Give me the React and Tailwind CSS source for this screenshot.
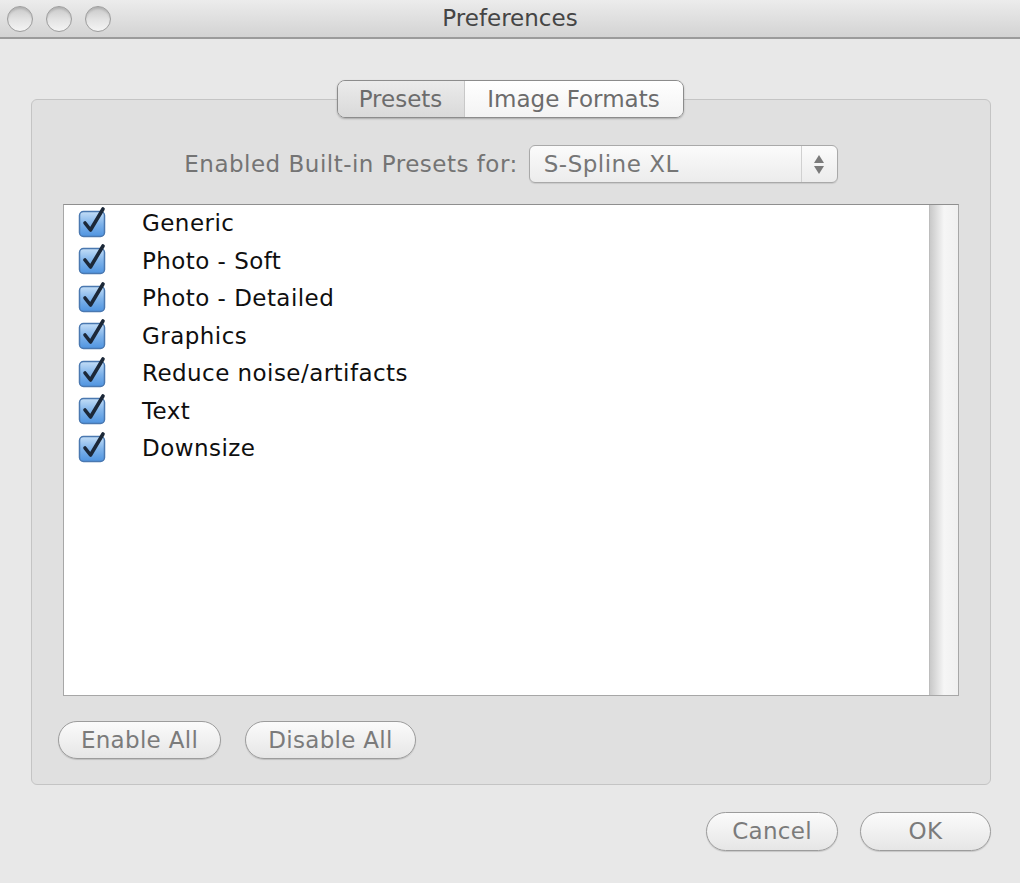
import React from 'react'

const presets = [
  'Generic',
  'Photo - Soft',
  'Photo - Detailed',
  'Graphics',
  'Reduce noise/artifacts',
  'Text',
  'Downsize',
]

const font = { fontFamily: '"DejaVu Sans", "Liberation Sans", sans-serif' }

const TrafficLight = () => (
  <div className="w-[26px] h-[26px] rounded-full border border-[#9d9d9d] bg-gradient-to-b from-[#c9c9c9] via-[#e2e2e2] to-[#f4f4f4] shadow-[inset_0_2px_2px_rgba(0,0,0,0.12)]" />
)

const CheckBox = () => (
  <svg width="30" height="32" viewBox="0 0 30 32" className="shrink-0 -mt-[4px]">
    <defs>
      <linearGradient id="cbFill" x1="0" y1="0" x2="0" y2="1">
        <stop offset="0" stopColor="#c4def7" />
        <stop offset="0.5" stopColor="#7fb3ea" />
        <stop offset="1" stopColor="#4f94e0" />
      </linearGradient>
    </defs>
    <rect x="1.5" y="5.5" width="25" height="25" rx="4" fill="url(#cbFill)" stroke="#4a78b0" strokeWidth="1.5" />
    <path d="M7 17 L12.5 24 L25 3" fill="none" stroke="#1c2838" strokeWidth="3.6" strokeLinecap="round" strokeLinejoin="round" />
  </svg>
)

const PillButton = ({ children, className }) => (
  <button
    className={`h-[38px] rounded-full border border-[#9c9c9c] bg-gradient-to-b from-[#fbfbfb] to-[#e6e6e6] text-[23px] tracking-[0.3px] text-[#7b7b7b] shadow-[0_1px_1px_rgba(0,0,0,0.15)] ${className}`}
    style={font}
  >
    {children}
  </button>
)

export default function App() {
  return (
    <div className="w-[1020px] h-[883px] bg-[#e8e8e8] flex flex-col overflow-hidden" style={font}>
      {/* title bar */}
      <div className="h-[39px] shrink-0 relative flex items-center bg-gradient-to-b from-[#ececec] to-[#d3d3d3] border-b-2 border-[#9b9b9b]">
        <div className="flex gap-[13px] pl-[7px]">
          <TrafficLight />
          <TrafficLight />
          <TrafficLight />
        </div>
        <div className="absolute inset-0 flex items-center justify-center text-[23px] text-[#454545]">
          Preferences
        </div>
      </div>

      {/* tabs */}
      <div className="mt-[41px] flex justify-center relative z-10">
        <div className="flex h-[38px] rounded-[8px] border border-[#8c8c8c] overflow-hidden shadow-[0_1px_2px_rgba(0,0,0,0.25)] text-[23px]">
          <div className="w-[127px] flex items-center justify-center bg-gradient-to-b from-[#ebebeb] to-[#d9d9d9] text-[#6c6c6c] border-r border-[#c8c8c8]">
            Presets
          </div>
          <div className="w-[218px] flex items-center justify-center bg-gradient-to-b from-[#ffffff] to-[#f3f3f3] text-[#6c6c6c]">
            Image Formats
          </div>
        </div>
      </div>

      {/* group box */}
      <div className="mx-[29px] ml-[31px] -mt-[19px] h-[686px] rounded-[6px] border border-[#c4c4c4] bg-[#e0e0e0] flex flex-col pt-[45px] px-[31px] pb-[25px]">
        <div className="flex items-center justify-center gap-[11px]">
          <span className="text-[23px] tracking-[0.5px] text-[#747474]">Enabled Built-in Presets for:</span>
          <div className="w-[309px] h-[38px] rounded-[6px] border border-[#a9a9a9] bg-gradient-to-b from-[#fbfbfb] to-[#ececec] flex items-center shadow-[0_1px_1px_rgba(0,0,0,0.1)]">
            <span className="flex-1 pl-[14px] text-[23px] tracking-[0.5px] text-[#767676]">S-Spline XL</span>
            <div className="w-[36px] h-full border-l border-[#d0d0d0] flex flex-col items-center justify-center gap-[3px]">
              <svg width="10" height="8" viewBox="0 0 10 8"><path d="M5 0 L10 8 L0 8 Z" fill="#7a7a7a" /></svg>
              <svg width="10" height="8" viewBox="0 0 10 8"><path d="M0 0 L10 0 L5 8 Z" fill="#7a7a7a" /></svg>
            </div>
          </div>
        </div>

        <div className="mt-[21px] h-[494px] bg-white border border-[#a7a7a7] border-t-[#8f8f8f] flex">
          <div className="flex-1 flex flex-col">
            {presets.map((p) => (
              <div key={p} className="h-[37.5px] flex items-center pl-[14px]">
                <CheckBox />
                <span className="ml-[34px] text-[23px] tracking-[0.45px] text-[#0f0f0f] leading-none">{p}</span>
              </div>
            ))}
          </div>
          <div className="w-[29px] bg-gradient-to-r from-[#c9c9c9] via-[#f6f6f6] to-[#f0f0f0] border-l border-[#bdbdbd]" />
        </div>

        <div className="mt-[25px] -ml-[5px] flex gap-[24px]">
          <PillButton className="w-[163px]">Enable All</PillButton>
          <PillButton className="w-[171px]">Disable All</PillButton>
        </div>
      </div>

      {/* dialog buttons */}
      <div className="mt-[27px] mr-[29px] flex justify-end gap-[22px]">
        <PillButton className="w-[132px] h-[39px]">Cancel</PillButton>
        <PillButton className="w-[131px] h-[39px]">OK</PillButton>
      </div>
    </div>
  )
}
